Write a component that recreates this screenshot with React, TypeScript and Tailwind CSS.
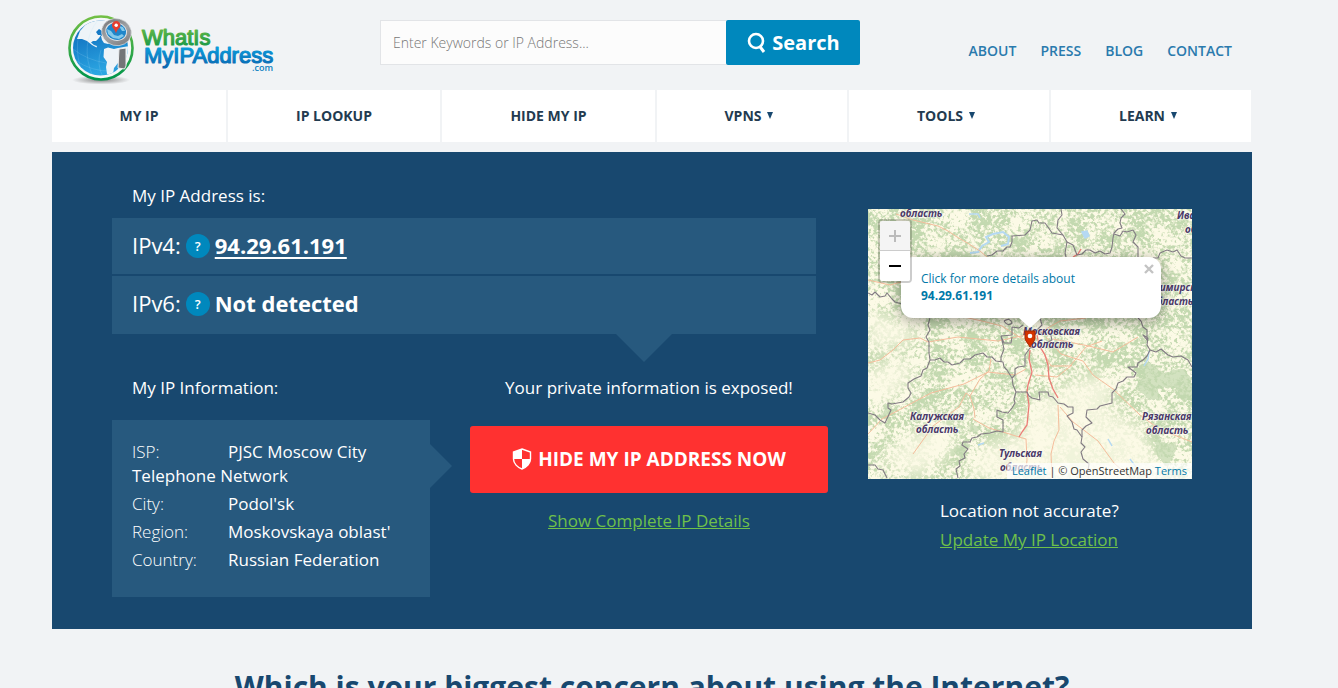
import React from "react";

const topLinks = ["ABOUT", "PRESS", "BLOG", "CONTACT"];

const menu = [
  { label: "MY IP", drop: false },
  { label: "IP LOOKUP", drop: false },
  { label: "HIDE MY IP", drop: false },
  { label: "VPNS", drop: true },
  { label: "TOOLS", drop: true },
  { label: "LEARN", drop: true },
];

const details = [
  { name: "ISP:", value: "PJSC Moscow City Telephone Network" },
  { name: "City:", value: "Podol'sk" },
  { name: "Region:", value: "Moskovskaya oblast'" },
  { name: "Country:", value: "Russian Federation" },
];

function Logo() {
  return (
    <svg viewBox="0 0 224 90" className="h-[90px] w-56" role="img" aria-label="WhatIsMyIPAddress.com">
      <defs>
        <linearGradient id="ring" x1="0" y1="0" x2="0" y2="1">
          <stop offset="0" stopColor="#72bf44" />
          <stop offset="1" stopColor="#00954c" />
        </linearGradient>
        <linearGradient id="sea" x1="0" y1="0" x2="0.3" y2="1">
          <stop offset="0.3" stopColor="#1477c4" />
          <stop offset="1" stopColor="#2ba6e2" />
        </linearGradient>
        <linearGradient id="green" gradientUnits="userSpaceOnUse" x1="0" y1="29" x2="0" y2="46">
          <stop offset="0" stopColor="#5fb646" />
          <stop offset="1" stopColor="#1c9a48" />
        </linearGradient>
        <linearGradient id="blue" gradientUnits="userSpaceOnUse" x1="0" y1="47" x2="0" y2="67">
          <stop offset="0" stopColor="#0a9ddb" />
          <stop offset="1" stopColor="#0a66b0" />
        </linearGradient>
        <linearGradient id="steel" x1="0" y1="0" x2="1" y2="1">
          <stop offset="0" stopColor="#6d6e71" />
          <stop offset="0.5" stopColor="#a2a4a7" />
          <stop offset="1" stopColor="#737477" />
        </linearGradient>
        <radialGradient id="shade">
          <stop offset="0" stopColor="#555" stopOpacity="0.7" />
          <stop offset="1" stopColor="#555" stopOpacity="0" />
        </radialGradient>
        <clipPath id="globe">
          <circle cx="48.500" cy="48" r="27.500" />
        </clipPath>
      </defs>
      <ellipse cx="49" cy="80" rx="29" ry="4.500" fill="url(#shade)" />
      <circle cx="49" cy="48" r="31.500" fill="#f5f7f8" stroke="url(#ring)" strokeWidth="2.600" />
      <circle cx="48.500" cy="48" r="27.500" fill="url(#sea)" />
      <g clipPath="url(#globe)">
        <path d="M25 39L28 31L35 23L44 19L54 19L57 24L52 29L50 31L47 29L44 32L46 35L49 35L47 38L44 41L41 41L39 42.500L42 45L45 46L44.500 47.500L40 45L35 41L30 39Z" fill="#eef4f8" />
        <path d="M49 36L53 34L56 38L59 42L56 44L52 43L50 40Z" fill="#eef4f8" />
        <path d="M52 49L56 47.500L62 49L66 48L77 46V62L68 76L60 77L55 74L54 67L55 62L51.500 57Z" fill="#eef4f8" />
        <path d="M62 68L66 63V69L61 74Z" fill="#2b9edd" />
        <path d="M34 20Q19 40 30 73M46 20Q27 44 41 77M49 50Q44 64 51 77M21 49Q35 60 54 63M23 60Q40 72 60 71" fill="none" stroke="#b6e1f7" strokeWidth="0.400" opacity="0.450" />
      </g>
      <path d="M67 49L74 48V66L72.500 69L66 68Z" fill="#737578" stroke="#edf0f1" strokeWidth="1" />
      <ellipse cx="64.500" cy="32" rx="15" ry="13.500" fill="url(#steel)" stroke="#e6e9eb" strokeWidth="0.600" transform="rotate(14 64 32)" />
      <ellipse cx="64" cy="31.500" rx="10.500" ry="8.800" fill="#1f86ca" stroke="#dfe2e4" strokeWidth="1" transform="rotate(14 64 32)" />
      <path d="M55 29L59 31L62 35L66 36L70 34L72 36L67 39L61 38L56 34ZM67 26L71 27L73 31L70 31Z" fill="#84c9eb" />
      <path d="M64 33.500C63 29 60 28.500 60 25.300A4.200 4.200 0 0 1 68.400 25.300C68.400 28.500 65 29 64 33.500Z" fill="#e63e30" />
      <circle cx="64.200" cy="25.200" r="1.700" fill="#fff" />
      <g className="font-['Liberation_Sans',sans-serif]" fontSize="22" strokeWidth="1.200" strokeLinejoin="round">
        <text x="90" y="45" fill="url(#green)" stroke="url(#green)">WhatIs</text>
        <text x="92" y="63" fill="url(#blue)" stroke="url(#blue)">MyIPAddress</text>
      </g>
      <text x="200" y="71" fontSize="9" fontWeight="600" fill="#0a7fc0" className="font-['Open_Sans',sans-serif]">.com</text>
    </svg>
  );
}

const borders = [
  "M193 0L194 6L190 11L189 19L195 26L199 33L197 44L198 48",
  "M199 33L205 36L209 46L214 45L218 41L222 41L227 44L232 42L237 45L242 44L244 38L245 29L246 24L250 20L254 19L252 14L253 9L257 5L253 0",
  "M246 25L252 27L255 22L259 23L265 21L268 26L265 33L270 38L270 48",
  "M195 26L184 24L180 18L177 14L171 14L169 11L164 12L162 21L157 26L144 27L144 33L142 38L139 38L135 42L129 42L124 46L119 47",
  "M285 49L290 49L292 44L299 41L305 43L309 41L313 47L317 49L324 49",
  "M0 84L4 86L7 83L12 88L17 87L19 84L24 90L27 93L34 95",
  "M62 109L60 116L62 121L58 128L61 133L61 144L62 151L59 159L55 161L53 167L46 170L40 174L40 179L43 184L41 188L35 193L24 195L20 194L20 199L23 201L17 214L12 211L7 206L0 204",
  "M62 151L67 151L72 149L76 153L80 153L84 156L92 154L96 150L102 150L107 146L115 144L119 148L124 148L128 152L135 153L136 158L139 161L144 169L145 176L148 183L146 190L147 194L144 199L140 204L134 203L129 201L129 208L135 211L135 223L129 222L122 224L113 225L109 228L104 229L102 233L95 233L94 236L100 240L96 245L97 249L91 252L92 257L88 260L90 269",
  "M144 169L147 166L147 160L150 158L157 157L157 146L162 139L165 138",
  "M148 183L159 183L161 187L164 189L172 191L171 183L180 183L181 187L185 188L190 194L196 195L200 198L205 198L205 204L199 207L204 213L206 220L209 221L214 228L213 234L217 238L213 243L215 250L221 255L220 262",
  "M214 228L214 221L218 217L224 214L218 208L219 201L229 200L232 197L244 194L244 184L248 180L250 174L255 172L259 168L266 168L268 164L260 158L269 158L270 154L275 151L279 147L282 141L279 136L280 129L275 126L279 131L279 121L275 118L273 112L270 109",
  "M282 141L288 143L293 140L300 146L305 148L313 147L320 151L324 158",
  "M0 256L7 256L10 260L15 261L19 269",
  "M155 116L151 119L144 118L144 126L133 127L136 134L143 134L144 128M133 127L136 140L133 148L133 153M136 112Q142 108 144 114Q140 118 136 112M172 109L174 116L169 121L176 125L182 123L184 131L178 134",
];

const roads = [
  "M28 5L45 11L70 17L80 22L89 28L101 35L112 42L119 48",
  "M0 154L12 151L25 141L35 131L52 129L60 133L90 128L130 132L158 126",
  "M0 225L14 210L63 184L96 175L120 163L147 166L158 160",
  "M123 150L121 162L112 170L102 187L106 200L107 209",
  "M45 245L65 217L91 198L98 184L102 187",
  "M105 210L121 219L135 223L151 228L158 230L159 251L158 262",
  "M178 128L193 145L215 152L225 166L245 180L272 206L291 220L324 233",
  "M190 196L191 221L186 232L183 245L184 269",
  "M192 198L205 213L217 222L230 232L246 254L264 270",
  "M156 131L134 117L114 112L96 108M171 124L192 112L218 109",
  "M174 141L183 157L202 157L218 138L234 132M167 166L189 168L204 156",
  "M270 128L245 143L221 137L185 130M0 71L22 76L33 73",
];

const mapLabels = [
  { text: "область", place: "left-8 top-[-3px]" },
  { text: "Ивановская", place: "left-[309px] top-[-1px]" },
  { text: "область", place: "left-[317px] top-[13px]" },
  { text: "Владимирская", place: "left-[268px] top-[71px]" },
  { text: "область", place: "left-[283px] top-[85px]" },
  { text: "Московская", place: "left-[155px] top-[115px]" },
  { text: "область", place: "left-[163px] top-[128px]" },
  { text: "Калужская", place: "left-[42px] top-[200px]" },
  { text: "область", place: "left-12 top-[213px]" },
  { text: "Рязанская", place: "left-[274px] top-[200px]" },
  { text: "область", place: "left-[278px] top-[214px]" },
  { text: "Тульская", place: "left-[131px] top-[237px]" },
  { text: "область", place: "left-[132px] top-[251px]" },
];

function LocationMap() {
  return (
    <div className="relative h-[270px] overflow-hidden bg-[#fcfae6]">
      <svg viewBox="0 0 324 270" preserveAspectRatio="xMidYMid slice" className="absolute inset-0 h-full w-full" aria-hidden="true">
        <defs>
          <filter id="forest" x="0" y="0" width="100%" height="100%" colorInterpolationFilters="sRGB">
            <feTurbulence type="fractalNoise" baseFrequency="0.3" numOctaves="3" seed="7" result="fine" />
            <feTurbulence type="fractalNoise" baseFrequency="0.05" numOctaves="3" seed="12" result="broad" />
            <feComposite in="fine" in2="broad" operator="arithmetic" k2="0.6" k3="0.4" result="mix" />
            <feColorMatrix in="mix" type="matrix" values="0 0 0 0 0.75  0 0 0 0 0.84  0 0 0 0 0.67  7 0 0 0 -3.1" result="patch" />
            <feComposite in="patch" in2="SourceAlpha" operator="in" />
          </filter>
          <filter id="rough" x="0" y="0" width="100%" height="100%">
            <feTurbulence type="fractalNoise" baseFrequency="0.2" numOctaves="2" seed="3" result="n" />
            <feDisplacementMap in="SourceGraphic" in2="n" scale="5" xChannelSelector="R" yChannelSelector="G" />
          </filter>
          <filter id="soften">
            <feGaussianBlur stdDeviation="7" />
          </filter>
          <mask id="cover">
            <rect width="324" height="270" fill="#eee" />
            <g filter="url(#soften)" fill="#111" opacity="0.85">
              <path d="M0 158L50 150L42 172L28 188L10 193L0 190Z" />
              <path d="M165 195L190 180L225 165L250 170L240 200L270 215L300 270L100 270L110 240L150 225Z" />
              <path d="M10 250L60 215L90 220L80 245L50 270Z" />
              <path d="M0 100L40 115L56 130L30 138L0 140Z" />
            </g>
          </mask>
        </defs>
        <g mask="url(#cover)">
          <rect width="324" height="270" filter="url(#forest)" />
        </g>
        <g filter="url(#rough)">
          <rect width="324" height="270" fill="#fff" opacity="0" />
          <path d="M270 158L282 153L293 163L315 160L324 170V192L313 190L308 178L290 180L295 192L280 190L268 178L276 166Z" fill="#c2d7af" opacity="0.7" />
          <path d="M286 218L294 232L310 236L306 246L300 260L289 247ZM96 231L102 236L96 248L86 244ZM17 193L24 197L20 212L14 207ZM102 215L114 218L108 224L100 222Z" fill="#c2d7af" opacity="0.7" />
        </g>
        <g fill="none" stroke="#b5d9f3" strokeWidth="1.500">
          <path d="M102 44L110 43L114 37L121 33L118 28L125 25L135 23L141 28L140 35L133 37" strokeWidth="2" />
          <path d="M214 23L219 22L221 27L217 29Z" fill="#b5d9f3" />
          <path d="M101 5L110 5L112 9M58 5L67 8M281 142L280 150L276 157M262 250L268 258M110 236L116 234M240 230L244 237" />
        </g>
        <g fill="none" stroke="#f5bd9c" strokeWidth="1">
          {roads.map((d) => (
            <path key={d} d={d} />
          ))}
        </g>
        <g fill="none" stroke="#ec7d77" strokeWidth="1.300">
          <path d="M162 141L161 150L164 163L160 176L159 183L161 196L159 216L154 223L151 228" />
          <path d="M169 126L171 136L177 146L180 156L181 169L185 180L190 189" />
          <path d="M205 48L210 45L213 40" />
        </g>
        <g fill="none" stroke="#827b83" strokeWidth="1.100" strokeLinejoin="round">
          {borders.map((d) => (
            <path key={d} d={d} />
          ))}
        </g>
      </svg>

      {mapLabels.map((l) => (
        <span
          key={l.place}
          className={`absolute font-['Noto_Sans',sans-serif] text-[10px] leading-[15px] font-bold whitespace-nowrap text-[#4b3a66] italic [text-shadow:0_0_2px_#fff,0_0_2px_#fff] ${l.place}`}
        >
          {l.text}
        </span>
      ))}

      <svg viewBox="0 0 12 18" className="absolute top-[121px] left-[156px] h-[18px] w-3" aria-hidden="true">
        <path d="M1 1H11V8C11 11 8 13 6 17C4 13 1 11 1 8Z" fill="#d63400" stroke="#a82a00" />
        <circle cx="6" cy="6" r="2.300" fill="#fff" />
      </svg>

      <div className="absolute top-12 left-[33px] h-[61px] w-[260px] rounded-xl bg-white px-5 py-[13px] text-[12px] leading-[17px] text-[#0078a8] shadow-[0_3px_14px_rgba(0,0,0,0.4)]">
        <a href="#details" className="block">
          Click for more details about
          <strong className="block">94.29.61.191</strong>
        </a>
        <button type="button" aria-label="Close popup" className="absolute top-[7px] right-[7px] flex size-[10px] items-center justify-center">
          <svg viewBox="0 0 10 10" className="size-[10px]" stroke="#c3c3c3" strokeWidth="2.400">
            <path d="M1 1L9 9M9 1L1 9" />
          </svg>
        </button>
        <svg viewBox="0 0 22 10" className="absolute top-[61px] left-[118px] h-2.5 w-[22px]" aria-hidden="true">
          <path d="M0 0H22L11 10Z" fill="#fff" />
        </svg>
      </div>

      <div className="absolute top-2.5 left-2.5 flex w-[34px] flex-col overflow-hidden rounded border-2 border-black/20 bg-clip-padding">
        <button type="button" aria-label="Zoom in" disabled className="flex h-[30px] items-center justify-center border-b border-[#ccc] bg-[#f4f4f4]">
          <svg viewBox="0 0 14 14" className="size-3.5" stroke="#bbb" strokeWidth="2">
            <path d="M1 7H13M7 1V13" />
          </svg>
        </button>
        <button type="button" aria-label="Zoom out" className="flex h-[30px] items-center justify-center bg-white">
          <svg viewBox="0 0 14 14" className="size-3.5" stroke="#000" strokeWidth="2">
            <path d="M1 7H13" />
          </svg>
        </button>
      </div>

      <div className="absolute right-0 bottom-0 bg-white/70 px-[5px] text-[11px] leading-4 text-[#333]">
        <a href="#leaflet" className="text-[#0078a8]">Leaflet</a>
        {" | © OpenStreetMap "}
        <a href="#terms" className="text-[#0078a8]">Terms</a>
      </div>
    </div>
  );
}

function Help({ label }: { label: string }) {
  return (
    <button type="button" aria-label={label} className="mx-[5px] mt-0.5 flex size-6 items-center justify-center rounded-full bg-[#0088bd] text-[13px] leading-none font-semibold">
      ?
    </button>
  );
}

export default function App() {
  return (
    <div className="h-screen overflow-hidden bg-[#f1f3f5] pr-[34px] font-['Open_Sans',sans-serif] text-white">
      <div className="mx-auto max-w-[1200px]">
        <header className="flex h-[90px] items-start">
          <a href="#home">
            <Logo />
          </a>
          <form className="mt-5 ml-[104px] flex h-[45px] w-[480px]" onSubmit={(e) => e.preventDefault()}>
            <input
              type="text"
              aria-label="Enter Keywords or IP Address"
              placeholder="Enter Keywords or IP Address..."
              className="min-w-0 flex-1 border border-r-0 border-[#e2e4e7] bg-[#fcfcfc] px-3 text-[14px] font-light text-[#444] outline-none placeholder:text-[#777]"
            />
            <button type="submit" className="flex w-[134px] items-center justify-center gap-1.5 rounded-xs bg-[#0088bd] text-[20px] font-bold">
              <svg viewBox="0 0 20 22" className="h-[22px] w-5" fill="none" stroke="#fff" strokeWidth="2.600" aria-hidden="true">
                <circle cx="10" cy="9" r="7" />
                <path d="M13.500 14L18 20" strokeWidth="3" />
              </svg>
              Search
            </button>
          </form>
          <nav aria-label="Site" className="mt-10 mr-5 ml-auto flex gap-6 text-[14px] leading-[22px] font-semibold text-[#2a7aad]">
            {topLinks.map((t) => (
              <a key={t} href={`#${t.toLowerCase()}`}>{t}</a>
            ))}
          </nav>
        </header>

        <nav aria-label="Main" className="mr-px grid h-[52px] grid-cols-[174fr_212fr_213fr_190fr_200fr_200fr] gap-0.5 text-[14px] font-bold text-[#233b50]">
          {menu.map((m) => (
            <a key={m.label} href="#menu" className="flex items-center justify-center bg-white pb-0.5">
              {m.label}
              {m.drop && (
                <svg viewBox="0 0 6 7" className="mr-1.5 ml-1.5 h-[7px] w-1.5" aria-hidden="true">
                  <path d="M0 0H6L3 7Z" fill="#18486f" />
                </svg>
              )}
            </a>
          ))}
        </nav>

        <main>
          <section className="mt-2.5 grid grid-cols-[716fr_324fr] gap-10 bg-[#18486f] px-[60px] pt-8 pb-8 text-[17px] leading-6">
            <div>
              <h2 className="pl-5">My IP Address is:</h2>
              <div className="relative mt-2.5 mr-3 flex flex-col gap-0.5 text-[22px]">
                <p className="flex h-14 items-center bg-[#27597e] px-5 pb-0.5">
                  IPv4: <Help label="About IPv4" />
                  <a href="#ip" className="font-bold underline decoration-2 underline-offset-3">94.29.61.191</a>
                </p>
                <p className="flex h-[58px] items-center bg-[#27597e] px-5 pb-1">
                  IPv6: <Help label="About IPv6" />
                  <span className="font-bold">Not detected</span>
                </p>
                <svg viewBox="0 0 56 28" className="absolute top-full right-[144px] h-7 w-14" aria-hidden="true">
                  <path d="M0 0H56L28 28Z" fill="#27597e" />
                </svg>
              </div>

              <div className="mt-[42px] grid grid-cols-[318fr_358fr] gap-10">
                <div>
                  <h2 className="pl-5">My IP Information:</h2>
                  <div className="relative mt-5 h-[177px] bg-[#27597e] px-5 pt-5">
                    {details.map((d) => (
                      <p key={d.name} className="mb-1">
                        <span className="inline-block w-24 font-light">{d.name}</span>
                        <span>{d.value}</span>
                      </p>
                    ))}
                    <svg viewBox="0 0 22 44" className="absolute top-6 left-full h-11 w-[22px]" aria-hidden="true">
                      <path d="M0 0L22 22L0 44Z" fill="#27597e" />
                    </svg>
                  </div>
                </div>
                <div className="text-center">
                  <p>Your private information is exposed!</p>
                  <button type="button" className="mt-[26px] flex h-[67px] w-full items-center justify-center gap-1.5 rounded-[3px] bg-[#ff3130] pb-0.5 text-[19px] font-bold">
                    <svg viewBox="0 0 20 22" className="h-[22px] w-5" aria-hidden="true">
                      <path d="M10 1L18.500 4V11C18.500 15.500 14.500 19.500 10 21C5.500 19.500 1.500 15.500 1.500 11V4Z" fill="none" stroke="#fff" strokeWidth="1.400" />
                      <path d="M10 1V11H1.500V4ZM10 11H18.500C18.500 15.500 14.500 19.500 10 21Z" fill="#fff" />
                    </svg>
                    HIDE MY IP ADDRESS NOW
                  </button>
                  <a href="#details" className="mt-4 inline-block text-[#6fc04a] underline">Show Complete IP Details</a>
                </div>
              </div>
            </div>

            <div className="pt-[25px]">
              <LocationMap />
              <div className="mt-5 pl-[72px]">
                <p>Location not accurate?</p>
                <a href="#update" className="mt-[5px] inline-block text-[#6fc04a] underline">Update My IP Location</a>
              </div>
            </div>
          </section>

          <h1 className="mt-9 text-center text-[30px] leading-[44px] font-bold text-[#18486f]">
            Which is your biggest concern about using the Internet?
          </h1>
        </main>
      </div>
    </div>
  );
}
